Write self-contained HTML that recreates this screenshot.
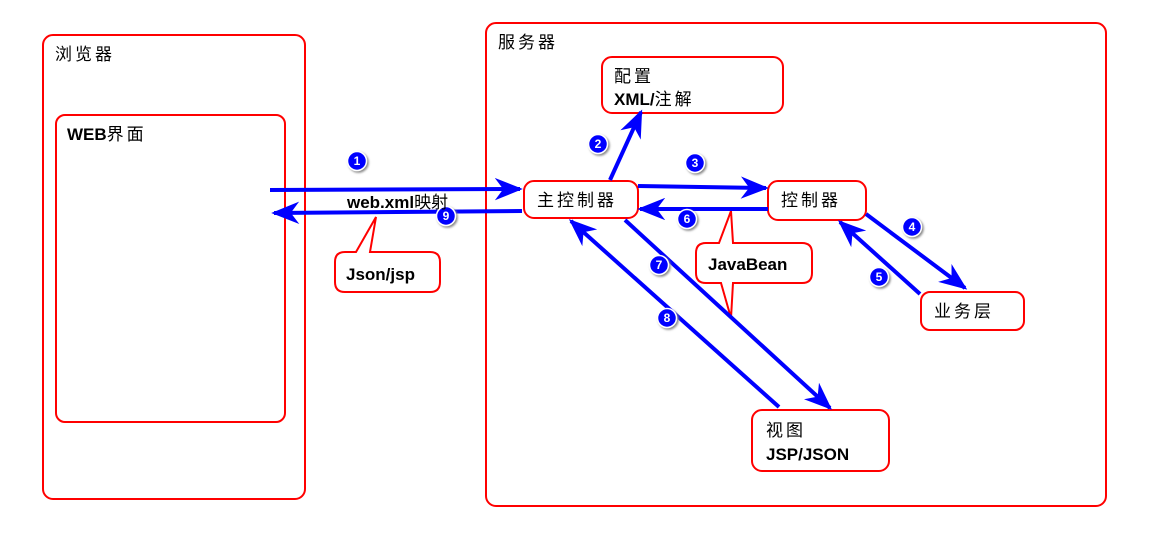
<!DOCTYPE html>
<html><head><meta charset="utf-8"><style>
html,body{margin:0;padding:0;background:#fff;}
svg{display:block}
text{font-family:"Liberation Sans","Noto Sans CJK SC",sans-serif;font-size:17px;fill:#000}
.b{font-weight:bold}
.cn{letter-spacing:3px}
.n{font-size:12px;font-weight:bold;fill:#fff;text-anchor:middle}
</style></head><body>
<svg width="1150" height="542" viewBox="0 0 1150 542" xmlns="http://www.w3.org/2000/svg">
<defs>
<marker id="ah" viewBox="0 0 20 16" refX="18" refY="8" markerWidth="7" markerHeight="5.6" markerUnits="strokeWidth" orient="auto">
<path d="M0,0 L20,8 L0,16 L6,8 Z" fill="#0000ff"/>
</marker>
<filter id="sh" x="-50%" y="-50%" width="200%" height="200%"><feDropShadow dx="1.5" dy="1.5" stdDeviation="1" flood-color="#888"/></filter>
</defs>
<g fill="#fff" stroke="#ff0000" stroke-width="2">
<rect x="43" y="35" width="262" height="464" rx="10"/>
<rect x="56" y="115" width="229" height="307" rx="9"/>
<rect x="486" y="23" width="620" height="483" rx="10"/>
<rect x="602" y="57" width="181" height="56" rx="10"/>
<rect x="524" y="181" width="114" height="37" rx="10"/>
<rect x="768" y="181" width="98" height="39" rx="10"/>
<rect x="921" y="292" width="103" height="38" rx="9"/>
<rect x="752" y="410" width="137" height="61" rx="10"/>
<path d="M345,252 H356 L376,217 L370,252 H430 Q440,252 440,262 V282 Q440,292 430,292 H345 Q335,292 335,282 V262 Q335,252 345,252 Z"/>
<path d="M706,243 H719 L731,211 L733,243 H802 Q812,243 812,253 V273 Q812,283 802,283 H733 L731,318 L721,283 H706 Q696,283 696,273 V253 Q696,243 706,243 Z"/>
</g>
<g stroke="#0000ff" stroke-width="4" fill="none" marker-end="url(#ah)">
<line x1="270" y1="190" x2="520" y2="189"/>
<line x1="522" y1="211" x2="274" y2="213"/>
<line x1="610" y1="180" x2="641" y2="112"/>
<line x1="638" y1="186" x2="766" y2="188"/>
<line x1="768" y1="209" x2="640" y2="209"/>
<line x1="866" y1="214" x2="965" y2="288"/>
<line x1="920" y1="294" x2="840" y2="222"/>
<line x1="625" y1="220" x2="830" y2="408"/>
<line x1="779" y1="407" x2="571" y2="221"/>
</g>
<g filter="url(#sh)" fill="#0000ff" stroke="#fff" stroke-width="1.5">
<circle cx="357" cy="161" r="9.5"/>
<circle cx="598" cy="144" r="9.5"/>
<circle cx="695" cy="163" r="9.5"/>
<circle cx="912" cy="227" r="9.5"/>
<circle cx="879" cy="277" r="9.5"/>
<circle cx="687" cy="219" r="9.5"/>
<circle cx="659" cy="265" r="9.5"/>
<circle cx="667" cy="318" r="9.5"/>
<circle cx="446" cy="216" r="9.5"/>
</g>
<text class="n" x="357" y="165">1</text>
<text class="n" x="598" y="148">2</text>
<text class="n" x="695" y="167">3</text>
<text class="n" x="912" y="231">4</text>
<text class="n" x="879" y="281">5</text>
<text class="n" x="687" y="223">6</text>
<text class="n" x="659" y="269">7</text>
<text class="n" x="667" y="322">8</text>
<text class="n" x="446" y="220">9</text>
<text class="cn" x="55" y="60">浏览器</text>
<text class="b" x="67" y="140">WEB<tspan font-weight="normal" class="cn">界面</tspan></text>
<text class="cn" x="498" y="48">服务器</text>
<text class="cn" x="614" y="82">配置</text>
<text class="b" x="614" y="105">XML/<tspan font-weight="normal" class="cn">注解</tspan></text>
<text class="cn" x="537" y="206">主控制器</text>
<text class="cn" x="781" y="206">控制器</text>
<text class="cn" x="934" y="317">业务层</text>
<text class="cn" x="766" y="436">视图</text>
<text class="b" x="766" y="460">JSP/JSON</text>
<text class="b" x="347" y="208">web.xml<tspan font-weight="normal">映射</tspan></text>
<text class="b" x="346" y="280">Json/jsp</text>
<text class="b" x="708" y="270">JavaBean</text>
</svg>
</body></html>
